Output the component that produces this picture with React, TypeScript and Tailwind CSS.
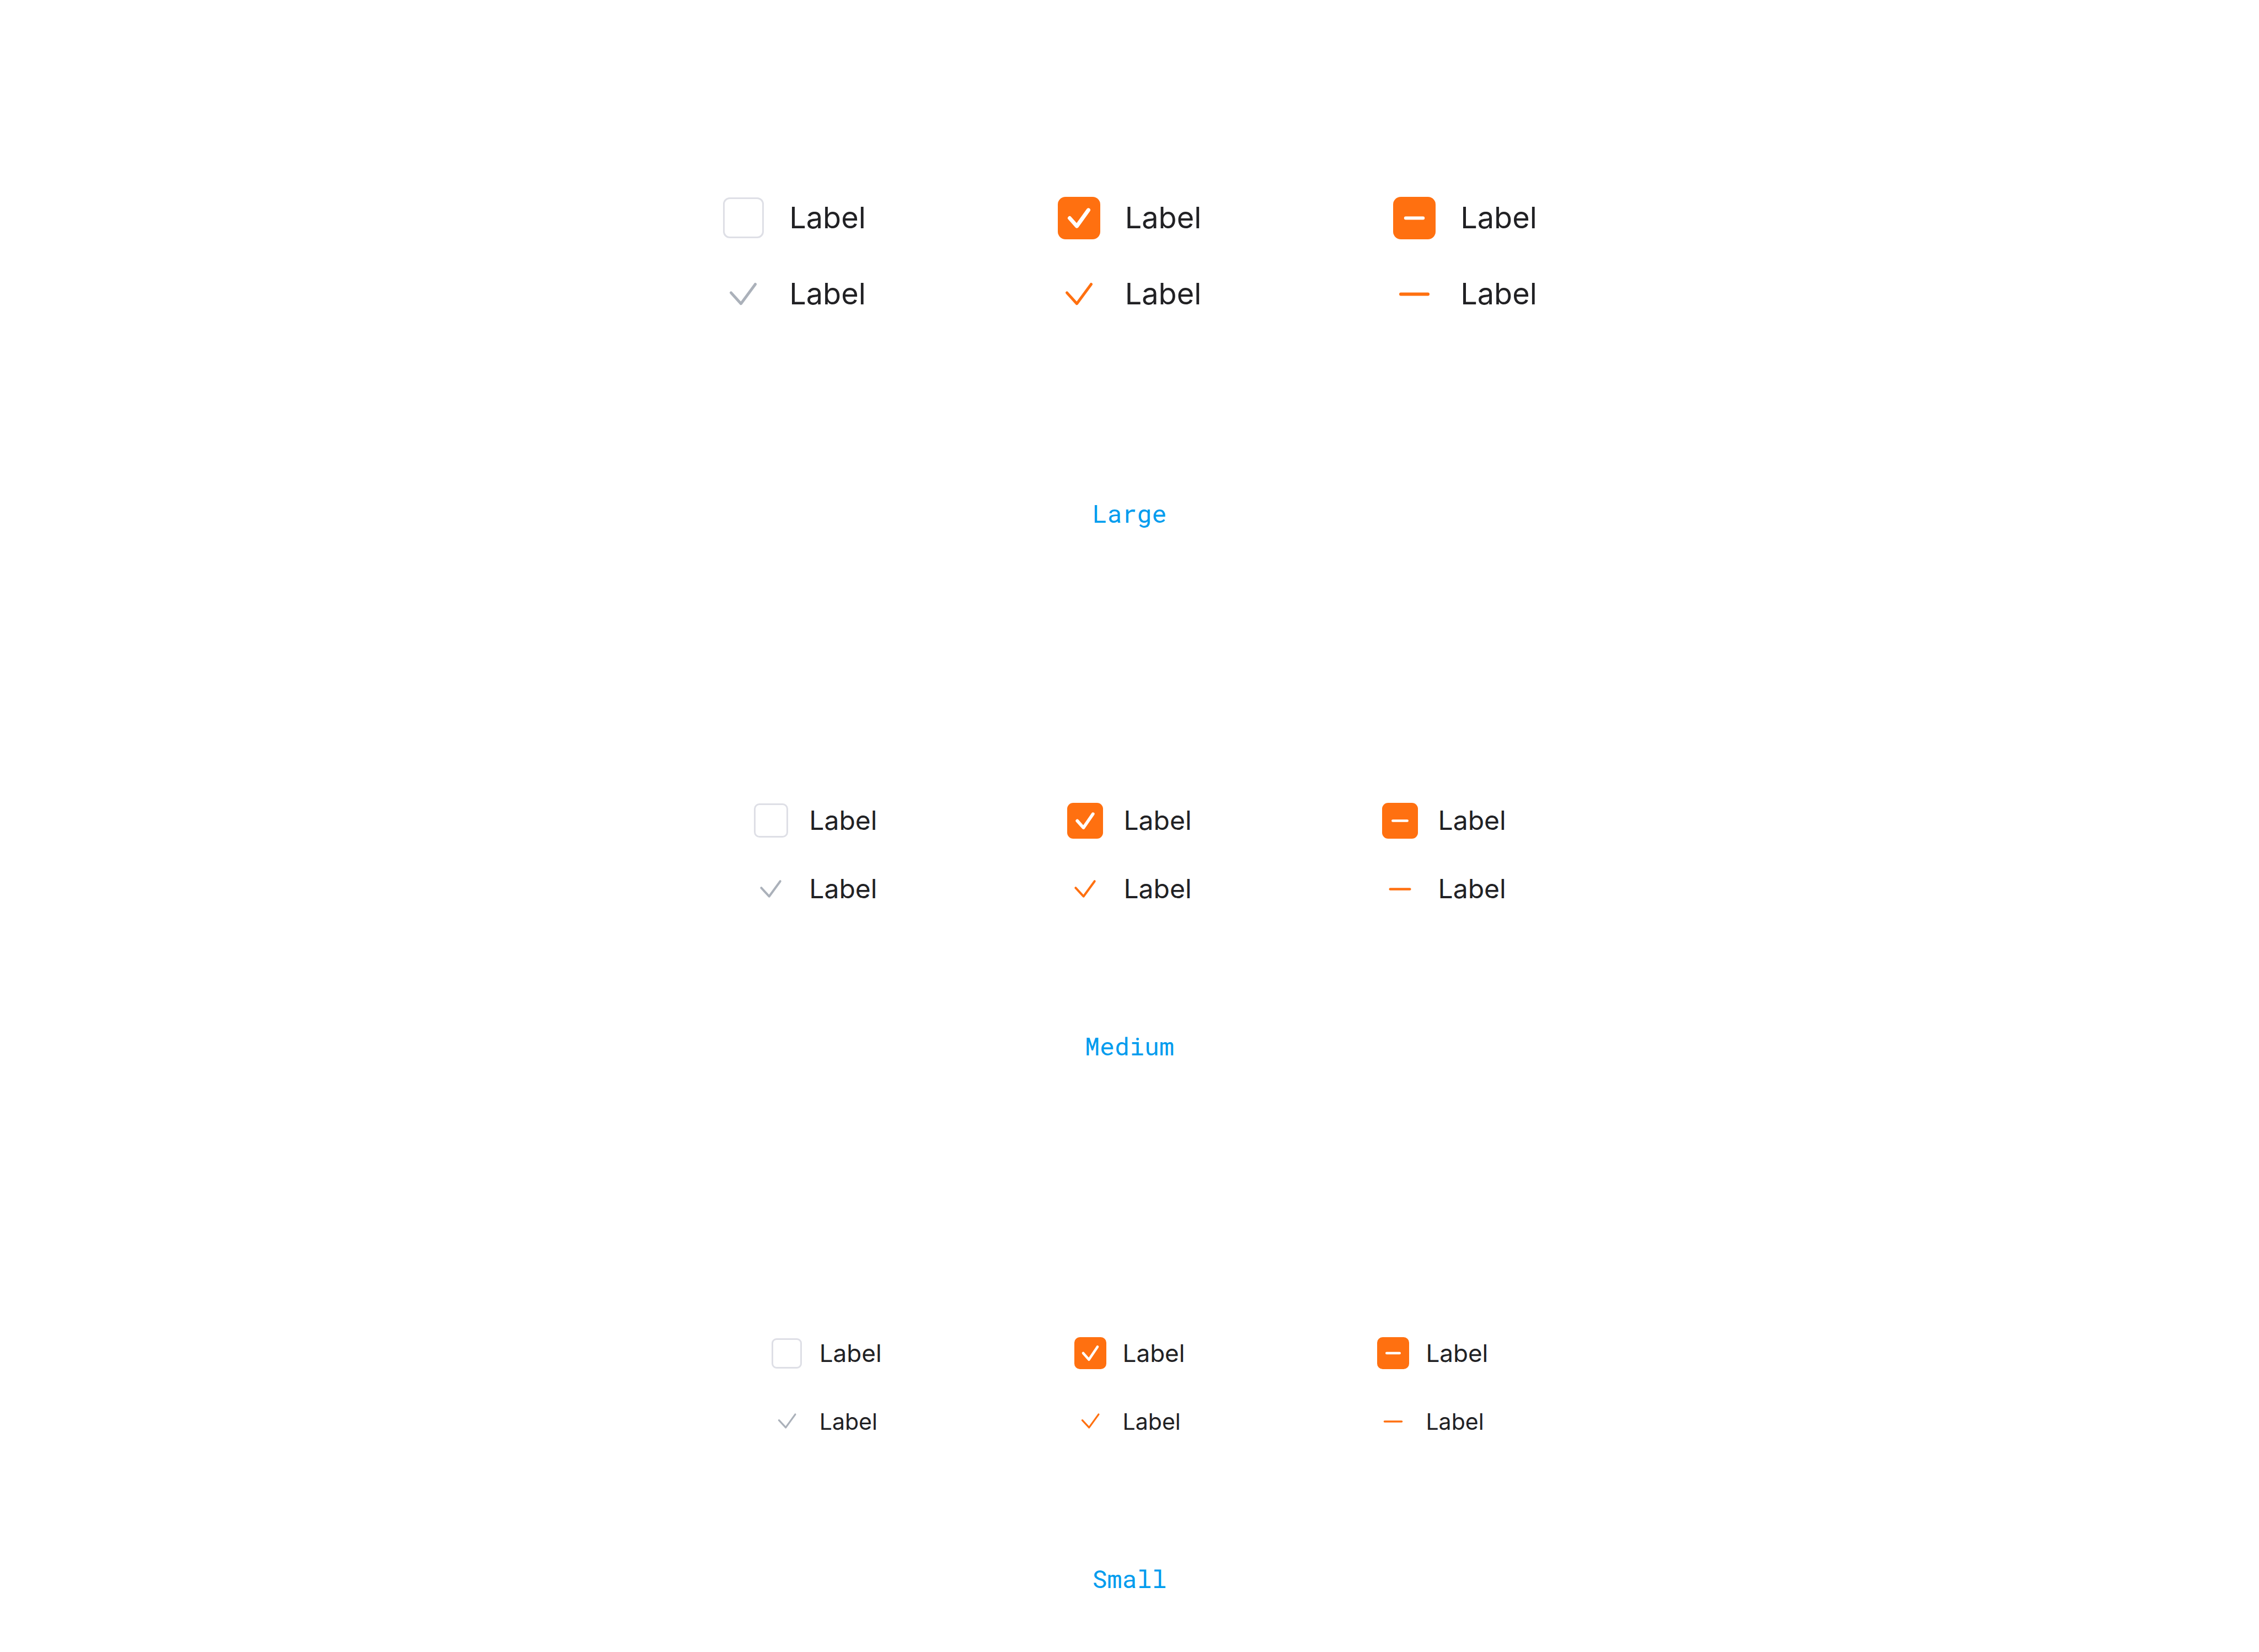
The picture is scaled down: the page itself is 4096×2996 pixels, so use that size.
import { useEffect, useId, useRef } from "react";

type State = "off" | "on" | "mixed";
type Variant = "box" | "ghost";

const sizes = {
  large: {
    viewBox: "-38.5 -38.5 77 77",
    slot: "size-[77px]",
    filled: "size-[77px] rounded-[14px]",
    empty: "size-[74px] rounded-[12px]",
    item: "h-[80px] gap-[45px] leading-[80px]",
    text: { box: "text-[54px]", ghost: "text-[54px]" },
    grid: "gap-x-[348px] gap-y-[58px]",
    check: { box: "-17,0 -4,14.6 17,-14.6", ghost: "-22,-2.6 -4,17.2 22,-18" },
    dash: { box: 15.8, ghost: 24.6 },
    checkWidth: { box: 7, ghost: 5 },
    dashWidth: { box: 5.8, ghost: 5.8 },
  },
  medium: {
    viewBox: "-32.5 -32.5 65 65",
    slot: "size-[65px]",
    filled: "size-[65px] rounded-[11px]",
    empty: "size-[62px] rounded-[10px]",
    item: "h-[80px] gap-[37px] leading-[80px]",
    text: { box: "text-[48px]", ghost: "text-[48px]" },
    grid: "gap-x-[345px] gap-y-[44px]",
    check: { box: "-14.3,0 -3,12.6 14.3,-12.3", ghost: "-17.2,-2.3 -2.9,13.2 17.2,-14.3" },
    dash: { box: 13.1, ghost: 17.7 },
    checkWidth: { box: 5.7, ghost: 4 },
    dashWidth: { box: 4.7, ghost: 4.7 },
  },
  small: {
    viewBox: "-29 -29 58 58",
    slot: "size-[58px]",
    filled: "size-[58px] rounded-[10px]",
    empty: "size-[55px] rounded-[9px]",
    item: "h-[80px] gap-[30px] leading-[80px]",
    text: { box: "text-[44px]", ghost: "text-[41px]" },
    grid: "gap-x-[349px] gap-y-[44px]",
    check: { box: "-13,0 -2.6,11.7 13,-11.5", ghost: "-14.6,-2.3 -2.3,10.9 14.9,-12.9" },
    dash: { box: 11.7, ghost: 15.5 },
    checkWidth: { box: 4.6, ghost: 3.3 },
    dashWidth: { box: 4.6, ghost: 3.6 },
  },
};

type Size = keyof typeof sizes;

function Checkbox({ size, state, variant }: { size: Size; state: State; variant: Variant }) {
  const id = useId();
  const ref = useRef<HTMLInputElement>(null);
  const s = sizes[size];

  useEffect(() => {
    if (ref.current) ref.current.indeterminate = state === "mixed";
  }, [state]);

  const look =
    variant === "ghost"
      ? s.slot
      : state === "off"
        ? `${s.empty} border-[3px] border-[#dedfe6] bg-white`
        : `${s.filled} bg-[#ff7010]`;
  const ink = variant === "box" ? "text-white" : state === "off" ? "text-[#abb1ba]" : "text-[#ff7010]";

  return (
    <div className={`flex items-center ${s.item}`}>
      <span className={`grid shrink-0 place-items-center ${s.slot}`}>
        <input
          ref={ref}
          id={id}
          type="checkbox"
          defaultChecked={state === "on"}
          className={`col-start-1 row-start-1 cursor-pointer appearance-none ${look}`}
        />
        <svg
          viewBox={s.viewBox}
          className={`pointer-events-none col-start-1 row-start-1 ${s.slot} ${ink}`}
          fill="none"
          stroke="currentColor"
          strokeLinecap="round"
          strokeLinejoin="round"
          aria-hidden="true"
        >
          {state === "mixed" ? (
            <line x1={-s.dash[variant]} x2={s.dash[variant]} y1="0" y2="0" strokeWidth={s.dashWidth[variant]} />
          ) : state === "on" || variant === "ghost" ? (
            <polyline points={s.check[variant]} strokeWidth={s.checkWidth[variant]} />
          ) : null}
        </svg>
      </span>
      <label htmlFor={id} className={`cursor-pointer text-[#212124] ${s.text[variant]} leading-[80px]`}>
        Label
      </label>
    </div>
  );
}

const states: State[] = ["off", "on", "mixed"];
const variants: Variant[] = ["box", "ghost"];

function Panel({ size, title, className }: { size: Size; title: string; className: string }) {
  return (
    <section className={`flex flex-col items-center ${className}`}>
      <div className={`grid grid-cols-[repeat(3,max-content)] ${sizes[size].grid}`}>
        {variants.map((variant) =>
          states.map((state) => <Checkbox key={variant + state} size={size} state={state} variant={variant} />),
        )}
      </div>
      <h2 className="font-['Roboto_Mono','DejaVu_Sans_Mono',monospace] text-[45px] leading-[60px] text-[#009cee]">
        {title}
      </h2>
    </section>
  );
}

export default function App() {
  return (
    <main className="flex min-h-screen flex-col bg-white pb-[102px] font-['Inter',sans-serif]">
      <Panel size="large" title="Large" className="gap-[328px] pt-[355px]" />
      <Panel size="medium" title="Medium" className="gap-[215px] pt-[487px]" />
      <Panel size="small" title="Small" className="gap-[215px] pt-[487px]" />
    </main>
  );
}
